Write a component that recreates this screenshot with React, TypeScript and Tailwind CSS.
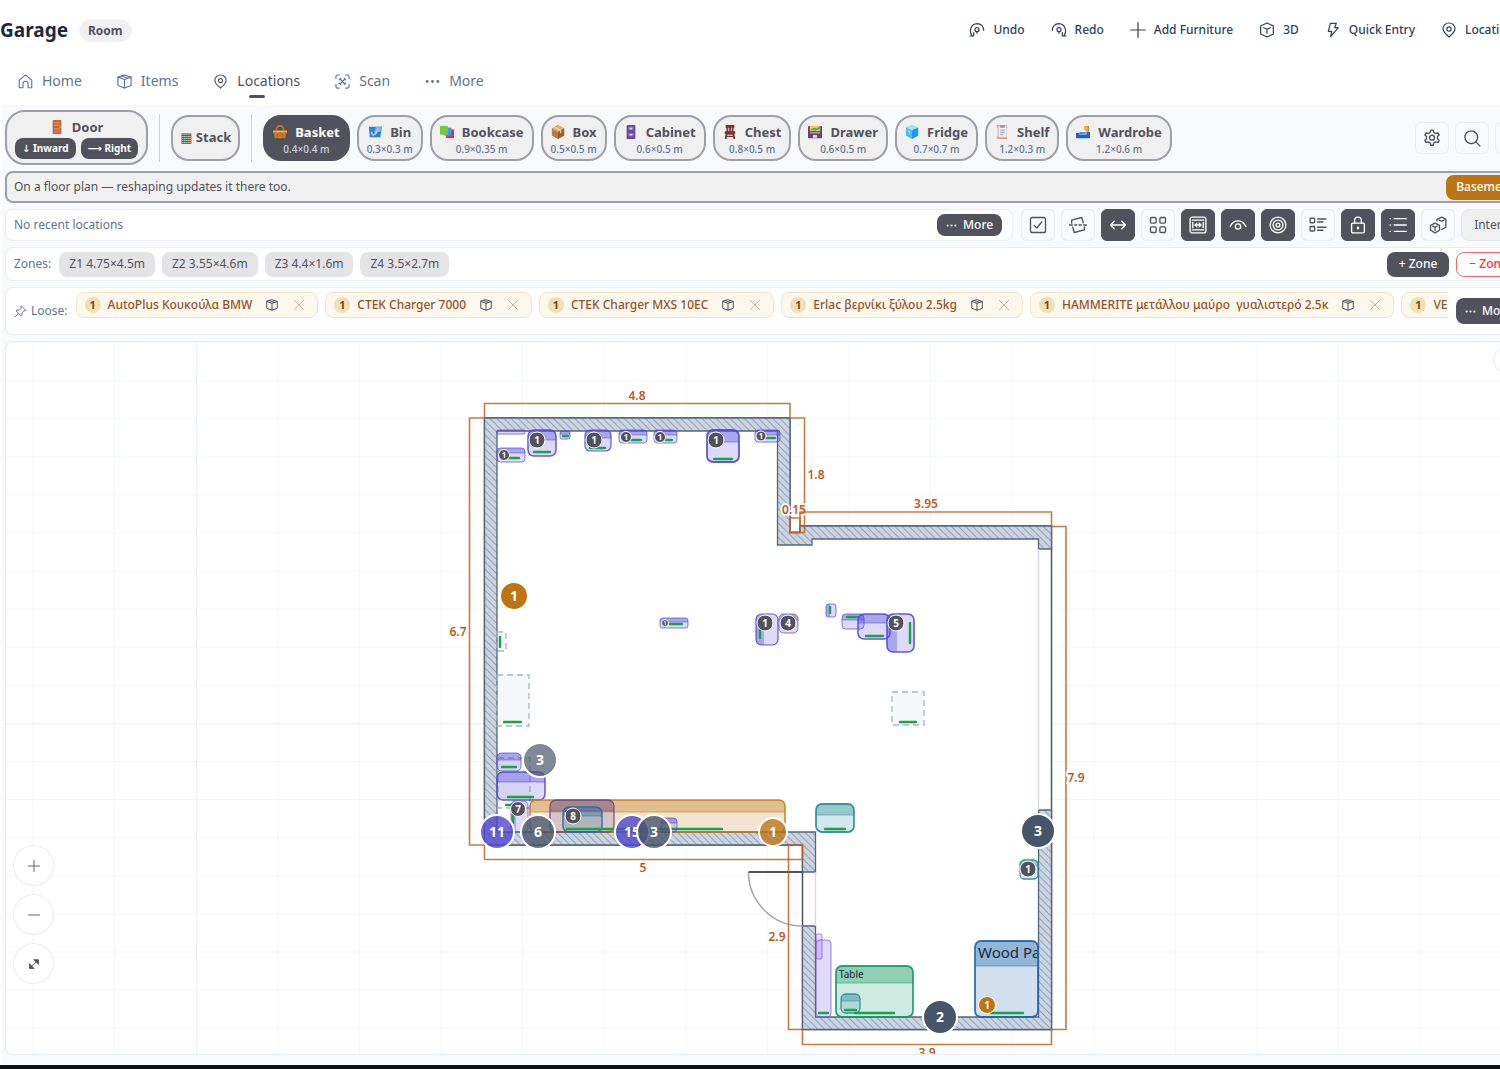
import React from "react";
import clsx from "clsx";

type IconProps = { className?: string; size?: number; children?: React.ReactNode };

function Icon({ className, size = 18, children }: IconProps) {
  return (
    <svg
      className={clsx("shrink-0", className)}
      width={size}
      height={size}
      viewBox="0 0 24 24"
      fill="none"
      stroke="currentColor"
      strokeWidth="1.8"
      strokeLinecap="round"
      strokeLinejoin="round"
      aria-hidden="true"
    >
      {children}
    </svg>
  );
}

const icons = {
  undo: (
    <>
      <path d="M4.5 20.5c-5-7-1.5-17.5 7.5-18 6.500 0 10 4.500 10 10" />
      <path d="M1.5 21h5.5v-5" />
      <circle cx="12" cy="11.5" r="3" />
      <path d="M12 14.5v2.5" />
    </>
  ),
  redo: (
    <>
      <path d="M19.5 20.5c5-7 1.5-17.5-7.500-18C5.5 2.5 2 7 2 12.5" />
      <path d="M22.5 21H17v-5" />
      <circle cx="12" cy="11.5" r="3" />
      <path d="M12 14.5v2.5" />
    </>
  ),
  plus: <path d="M12 1v22M1 12h22" />,
  minus: <path d="M1 12h22" />,
  cube: (
    <>
      <path d="M12 1.5l9.5 4.500v12L12 22.500 2.500 18V6z" />
      <path d="M7 8.500l5 2.500 5-2.500M12 11v6" />
    </>
  ),
  bolt: <path d="M8 2h9l-2.500 6.500H20L8.500 22l1.500-8H5z" />,
  pin: (
    <>
      <path d="M12 1.500c-5 0-9 3.700-9 8.700 0 5.300 5.500 8.800 9 12.300 3.500-3.500 9-7 9-12.300 0-5-4-8.700-9-8.700z" />
      <circle cx="12" cy="10.5" r="3.2" />
    </>
  ),
  home: <path d="M2 10L12 1.500 22 10v12h-6v-6.500a4 4 0 0 0-8 0V22H2z" />,
  items: (
    <>
      <path d="M12 1.500L22.500 5v13.500L12 22.500 1.500 18.500V5z" />
      <path d="M1.500 5L12 8.700 22.500 5M12 8.700v13.800M7 3.300l10.500 3.500" />
    </>
  ),
  scan: (
    <>
      <path d="M1.500 7V4A2.500 2.500 0 0 1 4 1.500h3M17 1.500h3A2.500 2.500 0 0 1 22.500 4v3M22.500 17v3a2.500 2.500 0 0 1-2.500 2.500h-3M7 22.500H4A2.500 2.500 0 0 1 1.500 20v-3" />
      <path d="M8 8l8 8M16 8l-8 8M6.500 9.500l3-3M14.500 6.500l3 3M17.500 14.500l-3 3M9.500 17.500l-3-3" />
    </>
  ),
  dots: (
    <g fill="currentColor" stroke="none">
      <circle cx="3.5" cy="12" r="2.3" />
      <circle cx="12" cy="12" r="2.3" />
      <circle cx="20.5" cy="12" r="2.3" />
    </g>
  ),
  gear: (
    <>
      <path d="M9.700 4.500L10.400 1.500h3.200l.7 3 2.700 1.500 3-.9 1.600 2.800-2.300 2.100v3.100l2.300 2.100-1.600 2.800-3-.9-2.700 1.600-.7 3h-3.200l-.7-3L7 17.100l-3 .9-1.600-2.800 2.300-2.100V10L2.400 7.900 4 5.100l3 .9z" />
      <circle cx="12" cy="11.6" r="3.3" />
    </>
  ),
  search: (
    <>
      <circle cx="11" cy="11" r="8.5" />
      <path d="M17.500 17.500L22.500 22.500" />
    </>
  ),
  check: (
    <>
      <rect x="2" y="2" width="20" height="20" rx="2.5" />
      <path d="M7 12.500l3.500 3.500L17 8" />
    </>
  ),
  rotate: (
    <>
      <path d="M3.500 9.500V5.500l13.500-3.500 2 7M20.500 14.500v4L7 22l-2-7" />
      <path d="M.5 12h4M7.500 12h3M13.500 12h3M19.500 12h4" />
    </>
  ),
  arrows: <path d="M2 12h20M7 7l-5 5 5 5M17 7l5 5-5 5" />,
  grid: (
    <>
      <rect x="2" y="2" width="7.5" height="7.5" rx="1.5" />
      <rect x="14.5" y="2" width="7.5" height="7.5" rx="1.5" />
      <rect x="2" y="14.5" width="7.5" height="7.5" rx="1.5" />
      <rect x="14.5" y="14.5" width="7.5" height="7.5" rx="1.5" />
    </>
  ),
  frame: (
    <>
      <rect x="1.5" y="1.5" width="21" height="21" rx="3" />
      <path d="M4.500 5.500h15M4.500 18.500h15M5 8.500v7M19 8.500v7M8 12h8M10.500 9.500L8 12l2.500 2.500M13.500 9.500L16 12l-2.500 2.500" />
    </>
  ),
  eye: (
    <>
      <path d="M1.500 14C4 9 7.500 6.500 12 6.500S20 9 22.500 14" />
      <circle cx="12" cy="14" r="3.5" />
    </>
  ),
  target: (
    <>
      <circle cx="12" cy="12" r="10.5" />
      <circle cx="12" cy="12" r="6.5" />
      <circle cx="12" cy="12" r="2.5" />
    </>
  ),
  details: (
    <>
      <rect x="1.5" y="3" width="6" height="6" rx="1" />
      <rect x="1.5" y="14" width="6" height="6" rx="1" />
      <path d="M11.500 4h11M11.500 8h7M11.500 15h11M11.500 19h7" />
    </>
  ),
  lock: (
    <>
      <rect x="3.5" y="9.5" width="17" height="13" rx="1.5" />
      <path d="M7.500 9.500V6a4.500 4.500 0 0 1 9 0v3.500" />
      <path d="M12 15.500v1" strokeWidth="3" />
    </>
  ),
  list: (
    <path d="M7 3.500h16M7 12h16M7 20.500h16M1.500 3.500h.5M1.500 12h.5M1.500 20.500h.5" />
  ),
  cubes: (
    <>
      <path d="M8 9.500l6 3v6.500l-6 3.500-6-3.500v-6.500zM5 13.500l3 1.500 3-1.500M8 15v4" />
      <path d="M10.500 6.500v-2L17 1.500l5.500 3V15L17 18M13.500 5.500l3.500 1.500 3-1.500" />
    </>
  ),
  pushpin: (
    <path d="M14 2l8 8-2 1-1.500-.5-4 4 .5 4-2 1.500L4 11l1.500-2 4 .5 4-4L13 4zM8.500 15.500L2 22" />
  ),
  close: <path d="M3 3l18 18M21 3L3 21" />,
};

const emojis: Record<string, React.ReactNode> = {
  door: (
    <>
      <rect x="3" y="0" width="10" height="16" rx="1" fill="#c4673c" />
      <path d="M5 3h6M5 6h6M5 10h6M5 13h6" stroke="#dc8a5b" strokeWidth="1.5" />
      <circle cx="11.5" cy="8" r=".8" fill="#f5c542" />
    </>
  ),
  basket: (
    <>
      <path d="M4 7V5a4 4 0 0 1 8 0v2" fill="none" stroke="#c07a30" strokeWidth="2" />
      <path d="M0 6h16v3h-1l-1 6H2L1 9H0z" fill="#c9792b" />
      <path d="M0 7.500h16" stroke="#f0b060" strokeWidth="1.5" />
      <path d="M5 10v4M8 10v4M11 10v4" stroke="#b0651f" />
    </>
  ),
  bin: (
    <>
      <path d="M1 2h15l-2 12H2z" fill="#2383e2" />
      <path d="M9 2h7l-2 6H7z" fill="#55c3f5" />
      <path d="M4 8c1 6 4 4 8-4" fill="none" stroke="#f1b3a5" strokeWidth="2" />
    </>
  ),
  books: (
    <>
      <rect x="7" y="5" width="9" height="10" fill="#d92f65" />
      <rect x="4" y="3" width="9" height="9" fill="#35a2e8" />
      <rect x="0" y="1" width="9" height="10" fill="#72cc35" />
    </>
  ),
  box: (
    <>
      <path d="M8 0l7 4v8l-7 4-7-4V4z" fill="#bd7844" />
      <path d="M1 4l7-4 7 4-7 4z" fill="#e5ac73" />
      <path d="M8 8v8l7-4V4z" fill="#9d5c34" />
      <path d="M4 2.500l7 4v3" fill="none" stroke="#f3cfaa" strokeWidth="1.5" />
    </>
  ),
  cabinet: (
    <>
      <rect x="3" y="0" width="10" height="16" rx="1" fill="#684aa5" />
      <path d="M5 2h6v4H5zM5 9h6v4H5z" fill="#8a6bc8" />
      <path d="M6.500 4h3M6.500 11h3" stroke="#f0e9ff" strokeWidth="1.5" />
    </>
  ),
  chair: (
    <>
      <path d="M3 0h10v3h-1v4h2v3h-1l1 6h-2l-1-5H5l-1 5H2l1-6H2V7h2V3H3z" fill="#7e3033" />
      <path d="M6 3h1v4H6zM9 3h1v4H9z" fill="#f2dfdf" />
      <path d="M4 13h8" stroke="#7e3033" strokeWidth="1.5" />
    </>
  ),
  drawer: (
    <>
      <rect x="0" y="1" width="16" height="14" rx="1" fill="#604273" />
      <path d="M2 1h12v6H2z" fill="#f9ca46" />
      <path d="M3 5l4-2 3 1 4-3v3l-4 2H3z" fill="#3cae78" />
      <path d="M2 9h12M6 12h4v2H6z" stroke="#e6def2" fill="#e6def2" />
    </>
  ),
  ice: (
    <>
      <path d="M1 3l7-3 7 3v9l-7 4-7-4z" fill="#4cb9f3" />
      <path d="M1 3l7-3 7 3-7 3z" fill="#9ce5fd" />
      <path d="M8 6v10l7-4V3z" fill="#2994e4" />
      <path d="M3 6l3 1v4z" fill="#b7efff" />
    </>
  ),
  shelf: (
    <>
      <path d="M2 0h12v3h-1v10h1v3H2v-3h1V3H2z" fill="#dca486" />
      <rect x="4" y="1" width="9" height="13" fill="#ece9f7" />
      <path d="M6 1h5v1.500H6zM6 6h5M6 8.500h5M6 11h3" stroke="#9a93b5" fill="#8b83aa" />
    </>
  ),
  wardrobe: (
    <>
      <path d="M9 1h5v7h-2l-3-3z" fill="#f5b52f" />
      <path d="M1 9h3v2h8V8h4v7H0V9z" fill="#1f5fc4" />
      <path d="M4 8h7v3H4z" fill="#4790f2" />
      <path d="M14 1v8" stroke="#8b6840" />
    </>
  ),
};

function Emoji({ name }: { name: string }) {
  return (
    <svg className="shrink-0" width="14" height="14" viewBox="0 0 16 16" aria-hidden="true">
      {emojis[name]}
    </svg>
  );
}

const actions = [
  { icon: icons.undo, label: "Undo" },
  { icon: icons.redo, label: "Redo" },
  { icon: icons.plus, label: "Add Furniture" },
  { icon: icons.cube, label: "3D" },
  { icon: icons.bolt, label: "Quick Entry" },
  { icon: icons.pin, label: "Locations" },
];

const navItems = [
  { icon: icons.home, label: "Home" },
  { icon: icons.items, label: "Items" },
  { icon: icons.pin, label: "Locations", active: true },
  { icon: icons.scan, label: "Scan" },
  { icon: icons.dots, label: "More" },
];

const furnitureTypes = [
  { icon: "basket", label: "Basket", size: "0.4×0.4 m", active: true },
  { icon: "bin", label: "Bin", size: "0.3×0.3 m" },
  { icon: "books", label: "Bookcase", size: "0.9×0.35 m" },
  { icon: "box", label: "Box", size: "0.5×0.5 m" },
  { icon: "cabinet", label: "Cabinet", size: "0.6×0.5 m" },
  { icon: "chair", label: "Chest", size: "0.8×0.5 m" },
  { icon: "drawer", label: "Drawer", size: "0.6×0.5 m" },
  { icon: "ice", label: "Fridge", size: "0.7×0.7 m" },
  { icon: "shelf", label: "Shelf", size: "1.2×0.3 m" },
  { icon: "wardrobe", label: "Wardrobe", size: "1.2×0.6 m" },
];

const viewTools = [
  { name: "Select", icon: icons.check },
  { name: "Rotate", icon: icons.rotate },
  { name: "Dimensions", icon: icons.arrows, active: true },
  { name: "Grid", icon: icons.grid },
  { name: "Fit", icon: icons.frame, active: true },
  { name: "Visibility", icon: icons.eye, active: true },
  { name: "Focus", icon: icons.target, active: true },
  { name: "Details", icon: icons.details },
  { name: "Lock", icon: icons.lock, active: true },
  { name: "List", icon: icons.list, active: true },
  { name: "Blocks", icon: icons.cubes },
];

const zones = ["Z1 4.75×4.5m", "Z2 3.55×4.6m", "Z3 4.4×1.6m", "Z4 3.5×2.7m"];

const looseItems = [
  "AutoPlus Κουκούλα BMW",
  "CTEK Charger 7000",
  "CTEK Charger MXS 10EC",
  "Erlac βερνίκι ξύλου 2.5kg",
  "HAMMERITE μετάλλου μαύρο  γυαλιστερό 2.5κ",
  "VECTOR",
];

function Header() {
  return (
    <header className="bg-white">
      <div className="flex h-[60px] items-center pr-4">
        <h1 className="text-[19px] font-bold text-slate-800">Garage</h1>
        <span className="ml-[11px] rounded-full border border-slate-100 bg-[#f0f0f0] px-2 text-xs leading-[21px] font-bold text-zinc-600">
          Room
        </span>
        <div className="ml-auto flex items-center gap-[26px] text-slate-700">
          {actions.map((action) => (
            <button key={action.label} className="flex items-center gap-2 text-xs font-medium">
              <Icon size={16}>{action.icon}</Icon>
              {action.label}
            </button>
          ))}
        </div>
      </div>
      <nav className="flex h-[45px] gap-[35px] pl-[18px]">
        {navItems.map((item) => (
          <a
            key={item.label}
            href="#"
            className={clsx(
              "relative flex h-[42px] items-center gap-[9px] text-sm",
              item.active ? "text-zinc-600" : "text-slate-500"
            )}
          >
            <Icon size={15}>{item.icon}</Icon>
            {item.label}
            {item.active && (
              <span className="absolute bottom-1 left-1/2 h-[3px] w-4 -translate-x-1/2 rounded bg-zinc-600" />
            )}
          </a>
        ))}
      </nav>
    </header>
  );
}

function IconButton({ name, icon, active }: { name: string; icon: React.ReactNode; active?: boolean }) {
  return (
    <button
      aria-label={name}
      className={clsx(
        "flex h-8 w-[34px] shrink-0 items-center justify-center rounded-md border",
        active ? "border-zinc-600 bg-zinc-600 text-white" : "border-slate-200/70 bg-slate-50 text-zinc-600"
      )}
    >
      <Icon>{icon}</Icon>
    </button>
  );
}

function FurnitureToolbar() {
  return (
    <div className="flex items-center">
      <div className="flex h-[55px] flex-col items-center justify-center rounded-[20px] border-2 border-zinc-400 bg-[#f0f0f0] px-2">
        <button className="flex items-center gap-2 text-[13px] leading-[22px] font-bold text-zinc-600">
          <Emoji name="door" />
          Door
        </button>
        <div className="flex gap-[5px]">
          <button className="rounded-lg bg-zinc-600 px-[7px] text-[10px] leading-[21px] font-bold text-white">↓ Inward</button>
          <button className="rounded-lg bg-zinc-600 px-[7px] text-[10px] leading-[21px] font-bold text-white">⟶ Right</button>
        </div>
      </div>
      <span className="mx-[11px] h-12 w-px bg-slate-300" />
      <button className="h-[46px] rounded-[18px] border-2 border-zinc-400 bg-[#f0f0f0] px-[7px] text-[13px] font-bold text-zinc-600">
        ▦ Stack
      </button>
      <span className="mx-[11px] h-12 w-px bg-slate-300" />
      <div className="flex gap-[7px]">
        {furnitureTypes.map((item) => (
          <button
            key={item.label}
            className={clsx(
              "flex h-[46px] flex-col items-center justify-center rounded-[18px] border-2 px-2 pt-1",
              item.active ? "border-zinc-600 bg-zinc-600 text-white" : "border-zinc-400 bg-[#f0f0f0] text-zinc-600"
            )}
          >
            <span className="flex items-center gap-2 text-[13px] leading-[18px] font-bold">
              <Emoji name={item.icon} />
              {item.label}
            </span>
            <span className={clsx("text-[10px] leading-4 font-medium", item.active ? "text-slate-300" : "text-slate-500")}>
              {item.size}
            </span>
          </button>
        ))}
      </div>
      <div className="ml-auto flex gap-[6px] pr-px">
        <IconButton name="Settings" icon={icons.gear} />
        <IconButton name="Search" icon={icons.search} />
        <IconButton name="Add" icon={icons.plus} />
      </div>
    </div>
  );
}

function MoreButton({ className }: { className?: string }) {
  return (
    <button className={clsx("flex shrink-0 items-center gap-[6px] rounded-lg bg-zinc-600 px-[9px] text-xs font-medium text-white", className)}>
      <Icon size={11}>{icons.dots}</Icon>
      More
    </button>
  );
}

function LooseChip({ label }: { label: string }) {
  return (
    <div className="flex h-[26px] shrink-0 items-center rounded-lg border border-[#f3e3c5] bg-[#fdf8ed] pr-3 pl-2">
      <span className="flex size-4 items-center justify-center rounded-full bg-[#f1dfb8] text-[11px] font-bold text-[#7a4a12]">1</span>
      <span className="ml-[7px] text-xs font-medium whitespace-pre text-[#98502a]">{label}</span>
      <button aria-label={"Place " + label} className="ml-[14px] text-zinc-700">
        <Icon size={12}>{icons.items}</Icon>
      </button>
      <button aria-label={"Remove " + label} className="ml-[15px] text-[#cfa47d]">
        <Icon size={12}>{icons.close}</Icon>
      </button>
    </div>
  );
}

type Mark = [number, number, number, number];

type Piece = {
  box: Mark;
  color: string;
  head?: number;
  side?: number;
  front?: Mark;
  width?: number;
  label?: string;
  labelSize?: number;
};

const violet = "#5146d8";
const teal = "#2a8a9a";

const pieces: Piece[] = [
  { box: [497, 430, 28, 4], color: violet, width: 1 },
  { box: [497, 448, 28, 14], color: violet, head: 5, front: [509, 458, 519, 458], width: 1 },
  { box: [528, 430, 28, 26], color: violet, head: 10, front: [534, 452, 550, 452], width: 1.5 },
  { box: [560, 431, 10, 8], color: violet, head: 3, front: [563, 436, 568, 436], width: 1 },
  { box: [585, 430, 26, 21], color: violet, head: 8, front: [590, 448, 605, 448], width: 1.2 },
  { box: [619, 430, 28, 13], color: violet, head: 5, front: [631, 440, 641, 440], width: 1 },
  { box: [654, 430, 23, 13], color: violet, head: 5, front: [666, 440, 672, 440], width: 1 },
  { box: [707, 430, 32, 32], color: violet, head: 12, front: [714, 459, 732, 459], width: 1.8 },
  { box: [755, 430, 25, 12], color: violet, head: 5, front: [766, 438, 775, 438], width: 1 },
  { box: [660, 618, 28, 10], color: violet, head: 4, front: [670, 624, 682, 624], width: 1 },
  { box: [756, 614, 22, 31], color: violet, side: 8, front: [760, 629, 760, 638], width: 1.2 },
  { box: [779, 614, 19, 19], color: violet, head: 6, width: 1 },
  { box: [826, 604, 10, 13], color: violet, side: 4, front: [830, 607, 830, 613], width: 1 },
  { box: [842, 614, 22, 15], color: violet, head: 6, front: [847, 617, 859, 617], width: 1 },
  { box: [858, 614, 32, 25], color: violet, head: 9, front: [866, 636, 883, 636], width: 1.5 },
  { box: [887, 614, 27, 38], color: violet, side: 10, front: [910, 623, 910, 643], width: 1.6 },
  { box: [497, 753, 24, 18], color: violet, head: 7, front: [502, 767, 516, 767], width: 1 },
  { box: [497, 772, 48, 28], color: violet, head: 10, front: [508, 797, 533, 797], width: 1.5 },
  { box: [511, 801, 17, 31], color: violet, side: 5, front: [513, 815, 513, 823], width: 1 },
  { box: [530, 800, 255, 32], color: "#c47a17", head: 12, width: 1.5 },
  { box: [550, 800, 64, 32], color: "#6b4a8a", head: 11, width: 1.3 },
  { box: [563, 807, 39, 25], color: "#246cab", head: 9, front: [567, 829, 722, 829], width: 1.5 },
  { box: [661, 818, 16, 14], color: violet, head: 5, width: 1 },
  { box: [816, 804, 38, 28], color: teal, head: 11, front: [825, 829, 845, 829], width: 1.8 },
  { box: [1020, 860, 18, 19], color: teal, head: 6, width: 1.3 },
  { box: [816, 940, 15, 77], color: "#6b4be0", front: [819, 1013, 828, 1013], width: 1 },
  { box: [816, 934, 6, 25], color: "#8b45e8", width: 1 },
  { box: [836, 966, 77, 51], color: "#149a68", head: 17, front: [855, 1013, 894, 1013], width: 1.8, label: "Table", labelSize: 10 },
  { box: [841, 994, 19, 19], color: teal, head: 7, front: [845, 1010, 856, 1010], width: 1.3 },
  { box: [975, 941, 63, 76], color: "#1c66ac", head: 25, front: [991, 1013, 1023, 1013], width: 1.8, label: "Wood Pa", labelSize: 15 },
];

const ghosts: { box: Mark; front: Mark }[] = [
  { box: [497, 632, 9, 19], front: [500, 637, 500, 647] },
  { box: [497, 675, 32, 51], front: [504, 722, 521, 722] },
  { box: [892, 692, 32, 33], front: [900, 722, 916, 722] },
  { box: [498, 758, 32, 50], front: [506, 805, 515, 805] },
];

const dark = "#52525b";

// x, y, radius, value, fill, opacity
const badges: [number, number, number, string, string, number][] = [
  [504, 455, 5.5, "1", dark, 1],
  [537, 440, 8, "1", dark, 1],
  [594, 440, 8, "1", dark, 1],
  [626, 437, 5.5, "1", dark, 1],
  [660, 437, 5.5, "1", dark, 1],
  [716, 440, 8, "1", dark, 1],
  [761, 436, 5, "1", dark, 1],
  [665, 623, 3.5, "1", dark, 1],
  [765, 623, 8, "1", dark, 1],
  [788, 623, 8, "4", dark, 1],
  [896, 623, 8, "5", dark, 1],
  [518, 809, 7.5, "7", dark, 1],
  [573, 816, 8, "8", dark, 1],
  [1028, 869, 8, "1", dark, 1],
  [987, 1005, 8.5, "1", "#bd7514", 1],
  [514, 596, 14, "1", "#bd7514", 1],
  [540, 760, 17, "3", "#475569", 0.7],
  [497, 832, 17, "11", "#4f46cf", 0.8],
  [538, 832, 17, "6", "#475569", 0.8],
  [632, 832, 17, "15", "#4f46cf", 0.8],
  [654, 832, 17, "3", "#475569", 0.8],
  [773, 832, 14, "1", "#bd7514", 0.78],
  [1038, 831, 17, "3", "#475569", 1],
  [940, 1017, 17, "2", "#475569", 1],
];

const dimensions = [
  { d: "M484.5 418V403.5H790V418", x: 637, y: 400, text: "4.8" },
  { d: "M484 418H469.5V845H484", x: 458, y: 636, text: "6.7" },
  { d: "M790 418H804.5V532.5H790", x: 816, y: 479, text: "1.8" },
  { d: "M790 532.5V518H800V532.5z", x: 794, y: 514, text: "0.15" },
  { d: "M800 526V512H1051.5V526", x: 926, y: 508, text: "3.95" },
  { d: "M1051.5 526.5H1066V1029.5H1051.5", x: 1076, y: 782, text: "7.9" },
  { d: "M484.5 845V859.5H802.5V845", x: 643, y: 872, text: "5" },
  { d: "M802.5 845H788.5V1029.5H802.5", x: 777, y: 941, text: "2.9" },
  { d: "M802.5 1029V1044.5H1051.5V1029", x: 927, y: 1057, text: "3.9" },
];

function FrontLine({ line }: { line: Mark }) {
  return (
    <line x1={line[0]} y1={line[1]} x2={line[2]} y2={line[3]} stroke="#16a34a" strokeWidth="2.4" strokeLinecap="round" />
  );
}

function PlanPiece({ piece }: { piece: Piece }) {
  const id = React.useId();
  const [x, y, w, h] = piece.box;
  const r = Math.min(6, w / 4, h / 4);
  return (
    <g>
      <clipPath id={id}>
        <rect x={x} y={y} width={w} height={h} rx={r} />
      </clipPath>
      <rect x={x} y={y} width={w} height={h} rx={r} fill={piece.color} fillOpacity="0.2" />
      <g clipPath={"url(#" + id + ")"}>
        {piece.head && (
          <>
            <rect x={x} y={y} width={w} height={piece.head} fill={piece.color} fillOpacity="0.35" />
            <path d={`M${x} ${y + piece.head}h${w}`} stroke={piece.color} strokeOpacity="0.5" />
          </>
        )}
        {piece.side && <rect x={x} y={y} width={piece.side} height={h} fill={piece.color} fillOpacity="0.35" />}
        {piece.label && (
          <text x={x + 3} y={y + (piece.head || 0) - (piece.labelSize === 10 ? 5 : 8)} fontSize={piece.labelSize} fill="#1e293b">
            {piece.label}
          </text>
        )}
      </g>
      <rect
        x={x}
        y={y}
        width={w}
        height={h}
        rx={r}
        fill="none"
        stroke={piece.color}
        strokeWidth={piece.width}
        strokeOpacity={piece.width === 1 ? 0.7 : 0.9}
      />
      {piece.front && <FrontLine line={piece.front} />}
    </g>
  );
}

function FloorPlan() {
  return (
    <svg className="block h-[712px] w-full" role="img" aria-label="Garage floor plan">
      <defs>
        <pattern id="cells" x="32.5" y="380" width="81.6" height="38.1" patternUnits="userSpaceOnUse">
          <path d="M.5 0V38.1M0 .5H81.6" stroke="#f4f7fa" fill="none" />
        </pattern>
        <pattern id="hatch" width="5" height="5" patternUnits="userSpaceOnUse" patternTransform="rotate(-45)">
          <rect width="5" height="5" fill="#cbd5e1" />
          <path d="M.5 0V5" stroke="#94a3b8" />
        </pattern>
      </defs>
      <g transform="translate(-6 -342)">
        <rect x="0" y="342" width="100%" height="712" fill="url(#cells)" />
        <path d="M196.5 342V1054M6 724H4000" stroke="#eef2f7" fill="none" />
        <path
          d="M484.5 418H790V532.5H800V526H1051.5V1029.5H802.5V845H484.5z"
          fill="#fff"
          stroke="#475569"
          strokeWidth="1.5"
        />
        <path
          d="M484.5 418H790V532.5H800V526H1051.5V549H1038.5V539H812V545H777.5V431H497V832H815.5V872H802.5V845H484.5z"
          fill="url(#hatch)"
          stroke="#54657c"
          strokeWidth="1.3"
        />
        <path
          d="M1038.5 810H1051.5V1029.5H802.5V926H815.5V1017H1038.5z"
          fill="url(#hatch)"
          stroke="#54657c"
          strokeWidth="1.3"
        />
        <path d="M1038.5 549V810M815.5 872V926" stroke="#d4d8df" strokeWidth="1.3" />
        <path d="M748.5 872A54 54 0 0 0 802.5 926" fill="none" stroke="#a8a8ac" strokeWidth="1.5" />
        <path d="M748.5 872H802.5" stroke={dark} strokeWidth="2" />
        {dimensions.map((dim) => (
          <g key={dim.d}>
            <path d={dim.d} fill="none" stroke="#c2611f" strokeOpacity="0.85" strokeWidth="1.6" />
            <text
              x={dim.x}
              y={dim.y}
              textAnchor="middle"
              fontSize="12"
              fontWeight="600"
              fill="#bd5a1a"
              stroke="#fff"
              strokeOpacity="0.85"
              strokeWidth="4"
              paintOrder="stroke"
            >
              {dim.text}
            </text>
          </g>
        ))}
        {ghosts.map((ghost, i) => (
          <g key={i}>
            <rect
              x={ghost.box[0]}
              y={ghost.box[1]}
              width={ghost.box[2]}
              height={ghost.box[3]}
              fill="#64748b"
              fillOpacity="0.06"
              stroke="#a9b5c6"
              strokeWidth="1.3"
              strokeDasharray="6 4"
            />
            <FrontLine line={ghost.front} />
          </g>
        ))}
        {pieces.map((piece, i) => (
          <PlanPiece key={i} piece={piece} />
        ))}
        {badges.map(([x, y, r, value, fill, opacity], i) => {
          const size = r > 10 ? 14 : r > 7 ? 10 : r > 4 ? 8 : 5;
          return (
            <g key={i}>
              <circle cx={x} cy={y} r={r} fill={fill} fillOpacity={opacity} stroke="#fff" strokeWidth={r > 10 ? 2 : 1} />
              <text x={x} y={y + size * 0.36} textAnchor="middle" fontSize={size} fontWeight="700" fill="#fff">
                {value}
              </text>
            </g>
          );
        })}
      </g>
    </svg>
  );
}

function ZoomControls() {
  const buttons = [
    { name: "Zoom in", icon: icons.plus },
    { name: "Zoom out", icon: icons.minus },
    {
      name: "Fit to screen",
      icon: (
        <g fill="currentColor">
          <path d="M5 19L19 5M12 3.500h9V12zM3 12v9h8.500z" />
        </g>
      ),
    },
  ];
  return (
    <div className="absolute bottom-[70px] left-[7px] flex flex-col gap-2">
      {buttons.map((button) => (
        <button
          key={button.name}
          aria-label={button.name}
          className="flex size-[41px] items-center justify-center rounded-full border border-slate-200/80 bg-white text-zinc-600"
        >
          <Icon size={12}>{button.icon}</Icon>
        </button>
      ))}
    </div>
  );
}

function App() {
  return (
    <div className="min-h-screen overflow-hidden bg-white font-['Noto_Sans','DejaVu_Sans',sans-serif]">
      <div className="-mr-9">
        <Header />
        <main className="ml-[2px] flex flex-col gap-[6px] bg-slate-50 pt-[5px] pr-[6px] pb-[10px] pl-[3px]">
          <FurnitureToolbar />

          <div className="flex h-8 items-center rounded-lg border-2 border-zinc-400 bg-[#f0f0f0] pr-1 pl-[7px] text-xs text-zinc-600">
            On a floor plan — reshaping updates it there too.
            <button className="ml-auto h-[25px] rounded-lg bg-[#bd7514] px-[10px] text-xs font-medium text-white">Basement</button>
          </div>

          <div className="flex items-center gap-[6px]">
            <div className="mr-[2px] flex h-8 grow items-center justify-between rounded-lg border border-slate-200/80 bg-white pr-[10px] pl-2 text-xs text-slate-500">
              No recent locations
              <MoreButton className="h-[22px]" />
            </div>
            {viewTools.map((tool) => (
              <IconButton key={tool.name} name={tool.name} icon={tool.icon} active={tool.active} />
            ))}
            <button className="h-8 rounded-lg border border-slate-200 bg-[#f0f0f0] px-3 text-xs text-zinc-600">Interior</button>
          </div>

          <div className="flex h-[34px] items-center rounded-lg border border-slate-200/80 bg-white px-2 text-xs text-slate-500">
            Zones:
            <div className="ml-2 flex gap-[7px]">
              {zones.map((zone) => (
                <button key={zone} className="h-[25px] rounded-lg bg-zinc-200 px-[10px] text-xs text-zinc-600">
                  {zone}
                </button>
              ))}
            </div>
            <div className="ml-auto flex gap-[7px]">
              <button className="h-[25px] rounded-lg bg-zinc-600 px-3 text-xs font-medium text-white">+ Zone</button>
              <button className="h-[25px] rounded-lg border border-red-400 bg-white px-3 text-xs font-medium text-red-500">− Zone</button>
            </div>
          </div>

          <div className="flex h-12 items-center rounded-lg border border-slate-200/80 bg-white px-2 text-xs text-slate-500">
            <Icon size={13}>{icons.pushpin}</Icon>
            <span className="ml-1">Loose:</span>
            <div className="mx-2 flex w-0 grow gap-[7px] self-start overflow-hidden pt-1">
              {looseItems.map((item) => (
                <LooseChip key={item} label={item} />
              ))}
            </div>
            <MoreButton className="h-[26px]" />
          </div>

          <section className="relative overflow-hidden rounded-lg border border-slate-200/80 bg-white">
            <FloorPlan />
            <ZoomControls />
            <button aria-label="Help" className="absolute top-1 right-2 size-7 rounded-full border border-slate-200 bg-white" />
          </section>
        </main>
        <footer className="h-[5px] bg-[#111]" />
      </div>
    </div>
  );
}

export default App;
